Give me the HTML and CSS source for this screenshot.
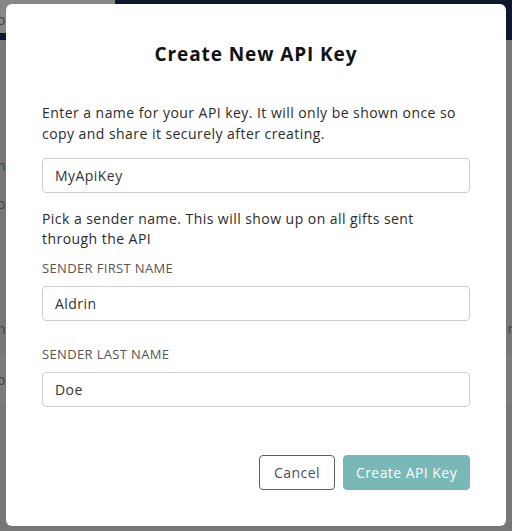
FILE: index.html
```html
<!DOCTYPE html>
<html lang="en">
<head>
<meta charset="utf-8">
<title>Create New API Key</title>
<link rel="stylesheet" href="styles.css">
</head>
<body>
<div class="page">
  <header class="topbar">
    <div class="topbar-left"><span class="frag">o</span></div>
    <div class="topbar-right"></div>
  </header>
  <div class="page-body">
    <div class="side-row"><span class="frag">n</span></div>
    <div class="side-row"><span class="frag">o</span></div>
    <div class="side-row lower"><span class="frag">n</span><span class="frag right">n</span></div>
    <div class="side-row band"><span class="frag">o</span></div>
  </div>
</div>
<div class="overlay">
  <div class="modal" role="dialog" aria-labelledby="modal-title">
    <h2 class="modal-title" id="modal-title">Create New API Key</h2>
    <p class="modal-text">Enter a name for your API key. It will only be shown once so copy and share it securely after creating.</p>
    <input class="field" type="text" value="MyApiKey">
    <p class="modal-text second">Pick a sender name. This will show up on all gifts sent through the API</p>
    <label class="field-label first">SENDER FIRST NAME</label>
    <input class="field" type="text" value="Aldrin">
    <label class="field-label">SENDER LAST NAME</label>
    <input class="field" type="text" value="Doe">
    <div class="actions">
      <button class="btn btn-cancel" type="button">Cancel</button>
      <button class="btn btn-primary" type="button">Create API Key</button>
    </div>
  </div>
</div>
</body>
</html>
```
FILE: styles.css
```css
* { box-sizing: border-box; }
html, body {
  margin: 0;
  padding: 0;
  width: 512px;
  height: 531px;
  overflow: hidden;
  background: #777777;
  font-family: "Open Sans", "Noto Sans", sans-serif;
}
.page {
  width: 512px;
  height: 531px;
}
.topbar {
  display: flex;
  height: 40px;
  background: #10172a;
}
.topbar-left {
  width: 115px;
  height: 33px;
  background: #878787;
  display: flex;
  align-items: center;
  padding-top: 6px;
}
.topbar-right { flex: 1; }
.page-body {
  display: flex;
  flex-direction: column;
  padding-top: 106px;
}
.side-row {
  height: 38px;
  display: flex;
  align-items: center;
  justify-content: space-between;
}
.side-row.lower { margin-top: 87px; }
.side-row.band {
  margin-top: 8px;
  height: 48px;
  background: #7c7c7c;
}
.frag { color: #444; font-size: 14px; margin-left: -3px; }
.frag.right { margin-left: 0; margin-right: -4px; }

.overlay {
  position: absolute;
  inset: 0;
  display: flex;
  justify-content: center;
  padding-top: 4px;
}
.modal {
  width: 500px;
  height: 522px;
  background: #ffffff;
  border-radius: 6px;
  padding: 36px 36px 36px 36px;
  display: flex;
  flex-direction: column;
}
.modal-title {
  margin: 0;
  font-size: 19px;
  line-height: 28px;
  font-weight: 700;
  letter-spacing: 0.9px;
  color: #111;
  text-align: center;
}
.modal-text {
  margin: 34px 0 0 0;
  font-size: 14px;
  line-height: 21px;
  letter-spacing: 0.45px;
  color: #2b2b2b;
}
.modal-text.second {
  margin-top: 16px;
  line-height: 20px;
}
.field {
  margin-top: 14px;
  height: 35px;
  width: 100%;
  border: 1px solid #cfcfcf;
  border-radius: 4px;
  padding: 0 12px;
  font-family: inherit;
  font-size: 14px;
  letter-spacing: 0.45px;
  color: #333;
  background: #fff;
}
.field-label {
  margin-top: 23px;
  font-size: 13px;
  line-height: 20px;
  letter-spacing: 0.35px;
  color: #555;
}
.field-label.first { margin-top: 9px; }
.field-label + .field { margin-top: 8px; }
.actions {
  margin-top: 48px;
  display: flex;
  justify-content: flex-end;
  gap: 8px;
}
.btn {
  height: 35px;
  border-radius: 4px;
  font-family: inherit;
  font-size: 14px;
  letter-spacing: 0.45px;
  padding: 0;
}
.btn-cancel {
  width: 76px;
  background: #fff;
  border: 1px solid #5a5f66;
  color: #4a4f57;
}
.btn-primary {
  width: 127px;
  background: #78b8b6;
  border: 1px solid #78b8b6;
  color: #fff;
}
```
